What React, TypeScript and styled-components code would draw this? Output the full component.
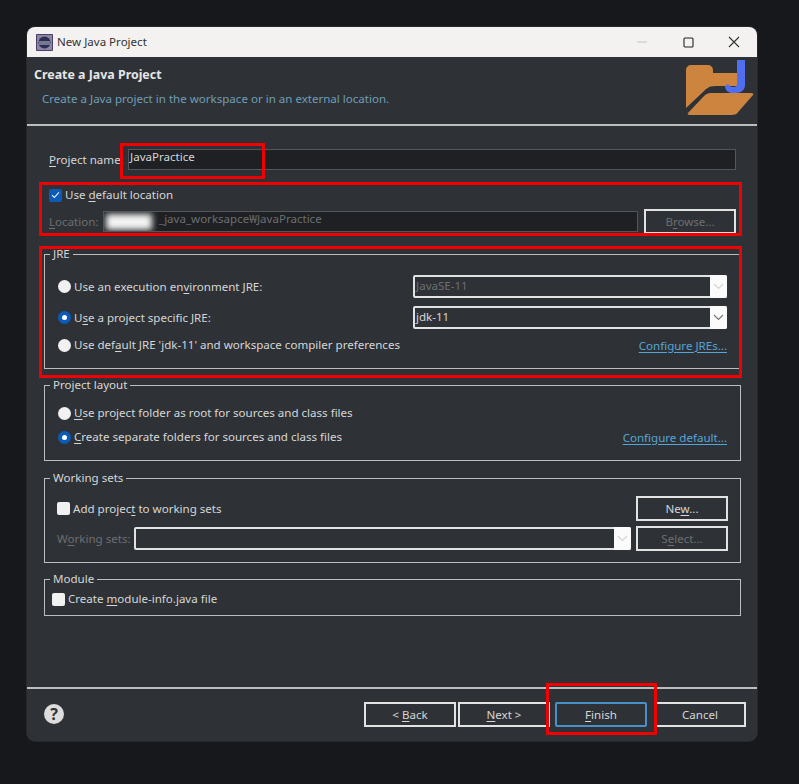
import React from 'react';
import styled, { createGlobalStyle } from 'styled-components';

const c = {
  page: '#16181b',
  panel: '#2e3236',
  field: '#1e2023',
  line: '#bdbdbd',
  text: '#d6d6d6',
  muted: '#6c6e70',
  link: '#55a5d6',
  blue: '#0a5cb8',
  red: '#f00000',
};

const GlobalStyle = createGlobalStyle`
  html, body {
    margin: 0;
    height: 100%;
    background: ${c.page};
  }
  body {
    font-family: "Noto Sans", "Open Sans", sans-serif;
    font-size: 11.55px;
    color: ${c.text};
  }
  u {
    text-underline-offset: 2px;
    text-decoration-thickness: 1px;
  }
`;

const Page = styled.div`
  padding: 27px 0 0 27px;
`;

const Window = styled.div`
  position: relative;
  width: 730px;
  height: 714px;
  display: flex;
  flex-direction: column;
  background: ${c.panel};
  border-radius: 8px;
  box-shadow: 0 0 0 1px #26292c;
  overflow: hidden;
`;

const TitleBar = styled.div`
  height: 30px;
  flex: none;
  display: flex;
  align-items: center;
  padding-left: 9px;
  background: #f3f2f0;
  color: #333;
`;

const TitleText = styled.span`
  flex: 1;
  margin-left: 4px;
  padding-bottom: 2px;
`;

const WinButton = styled.div`
  width: 46px;
  height: 30px;
  display: flex;
  align-items: center;
  justify-content: center;
`;

const Banner = styled.div`
  height: 67px;
  flex: none;
  display: flex;
  justify-content: space-between;
  padding: 0 2px 0 7px;
  border-bottom: 2px solid ${c.line};
`;

const BannerTitle = styled.div`
  font-size: 12.4px;
  font-weight: 700;
  color: #e6e6e6;
  margin-top: 9px;
  line-height: 17px;
`;

const BannerText = styled.div`
  margin: 7px 0 0 8px;
  color: #6f9db5;
  line-height: 17px;
`;

const LogoSlot = styled.div`
  margin-top: 1px;
`;

const Body = styled.div`
  flex: 1;
  display: flex;
  flex-direction: column;
  padding: 23px 16px 0 17px;
`;

const NameRow = styled.div`
  display: flex;
  align-items: center;
  padding: 0 5px;
  height: 21px;
`;

const NameLabel = styled.label`
  width: 79px;
  flex: none;
`;

const Field = styled.div<{ $disabled?: boolean }>`
  flex: 1;
  height: 21px;
  box-sizing: border-box;
  display: flex;
  align-items: center;
  padding: 0 0 6px 1px;
  overflow: hidden;
  background: ${c.field};
  border: 1px solid #53565a;
  color: ${(p) => (p.$disabled ? c.muted : c.text)};
`;

const LocationBlock = styled.div`
  display: flex;
  flex-direction: column;
  margin-top: 17px;
  padding: 0 5px;
  gap: 6px;
`;

const LocationRow = styled.div`
  display: flex;
  align-items: center;
  height: 25px;
  gap: 6px;
`;

const LocationLabel = styled.label<{ $width: number }>`
  width: ${(p) => p.$width}px;
  flex: none;
  white-space: nowrap;
  color: ${c.muted};
`;

const LocationField = styled.div`
  flex: 1;
  display: flex;
  margin-left: -6px;
`;

const Blurred = styled.span`
  width: 46px;
  height: 16px;
  margin: 6px 7px 0 1px;
  flex: none;
  background: #f4f4f4;
  filter: blur(3px);
`;

const Group = styled.div<{ $top: number; $pad: string }>`
  position: relative;
  margin-top: ${(p) => p.$top}px;
  padding: ${(p) => p.$pad};
  border: 1px solid ${c.line};
  display: flex;
  flex-direction: column;
`;

const GroupTitle = styled.span`
  position: absolute;
  top: -9px;
  left: 5px;
  padding: 0 3px;
  line-height: 16px;
  background: ${c.panel};
`;

const Row = styled.div<{ $height: number; $gap?: number }>`
  display: flex;
  align-items: center;
  justify-content: space-between;
  height: ${(p) => p.$height}px;
  margin-top: ${(p) => p.$gap ?? 0}px;
`;

const Option = styled.label`
  display: flex;
  align-items: center;
  gap: 3px;
  line-height: 16px;
`;

const Radio = styled.span<{ $on?: boolean }>`
  width: 13px;
  height: 13px;
  flex: none;
  box-sizing: border-box;
  border-radius: 50%;
  background: ${(p) => (p.$on ? c.blue : '#f1f1f1')};
  display: flex;
  align-items: center;
  justify-content: center;
  &::after {
    content: '';
    width: 5px;
    height: 5px;
    border-radius: 50%;
    background: ${(p) => (p.$on ? '#fff' : 'transparent')};
  }
`;

const Check = styled.span<{ $on?: boolean }>`
  width: 13px;
  height: 13px;
  flex: none;
  border-radius: 2px;
  background: ${(p) => (p.$on ? c.blue : '#f1f1f1')};
  display: flex;
  align-items: center;
  justify-content: center;
`;

const Combo = styled.div<{ $width: number; $disabled?: boolean }>`
  width: ${(p) => p.$width}px;
  height: 23px;
  flex: none;
  box-sizing: border-box;
  display: flex;
  align-items: stretch;
  border: 2px solid #e2e2e2;
  border-radius: 2px;
  background: ${c.panel};
  color: ${(p) => (p.$disabled ? c.muted : c.text)};
`;

const ComboText = styled.span`
  flex: 1;
  padding-left: 1px;
  line-height: 18px;
`;

const ComboArrow = styled.span`
  width: 17px;
  margin: -2px -2px -2px 0;
  background: #fbfbfb;
  border-radius: 0 2px 2px 0;
  display: flex;
  align-items: center;
  justify-content: center;
`;

const Link = styled.a`
  color: ${c.link};
  text-decoration: underline;
  text-underline-offset: 2px;
  text-decoration-thickness: 1px;
`;

const PushButton = styled.button<{ $disabled?: boolean; $focus?: boolean }>`
  width: 92px;
  height: 25px;
  flex: none;
  box-sizing: border-box;
  padding: 0;
  font: inherit;
  background: ${c.panel};
  color: ${(p) => (p.$disabled ? c.muted : c.text)};
  border: 2px solid ${(p) => (p.$focus ? '#4a90c8' : '#e2e2e2')};
  border-radius: ${(p) => (p.$focus ? '2px' : '0')};
`;

const SideRow = styled.div`
  display: flex;
  align-items: center;
  gap: 5px;
`;

const ModuleRow = styled.div`
  height: 20px;
  display: flex;
  align-items: center;
`;

const Footer = styled.div`
  height: 50px;
  flex: none;
  margin-top: auto;
  display: flex;
  align-items: center;
  padding: 0 11px 2px 17px;
  border-top: 2px solid ${c.line};
`;

const Help = styled.span`
  width: 20px;
  height: 20px;
  border-radius: 50%;
  background: #dcdcdc;
  color: #2e3236;
  font-weight: 700;
  font-size: 16px;
  line-height: 20px;
  text-align: center;
`;

const FooterButtons = styled.div`
  margin-left: auto;
  display: flex;
  gap: 2px;
`;

const FinishSlot = styled.div`
  display: flex;
  gap: 7px;
  margin-left: 3px;
`;

const Mark = styled.div<{ $x: number; $y: number; $w: number; $h: number }>`
  position: absolute;
  left: ${(p) => p.$x - 27}px;
  top: ${(p) => p.$y - 27}px;
  width: ${(p) => p.$w}px;
  height: ${(p) => p.$h}px;
  box-sizing: border-box;
  border: 3px solid ${c.red};
  pointer-events: none;
`;

const Chevron: React.FC<{ light?: boolean }> = ({ light }) => (
  <svg width="11" height="7" viewBox="0 0 11 7">
    <path d="M1 1l4.5 4.5L10 1" fill="none" stroke={light ? '#d4d4d4' : '#777'} strokeWidth="1.2" />
  </svg>
);

const Tick = () => (
  <svg width="9" height="8" viewBox="0 0 9 8">
    <path d="M1 4.2l2.4 2.2L8 1.4" fill="none" stroke="#e8f0fa" strokeWidth="1.1" />
  </svg>
);

const EclipseIcon = () => (
  <svg width="17" height="17" viewBox="0 0 17 17">
    <rect width="17" height="17" rx="1" fill="#4b3f6b" />
    <rect x="1" y="1" width="15" height="15" fill="#8c86a0" />
    <circle cx="8.5" cy="8.5" r="6" fill="#2c2f55" />
    <path d="M3 8h11M3 10h11" stroke="#e8e8ee" strokeWidth="0.8" />
  </svg>
);

const FolderLogo = () => (
  <svg width="70" height="62" viewBox="0 0 70 62">
    <path
      d="M1 12a5 5 0 0 1 5-5h17a5 5 0 0 1 5 5v3h24v13H30C24 28 21 31 18 34L1 50z"
      fill="#cc843f"
    />
    <path
      d="M3 55L19 38C21 36 23 35 26 35H66C68 35 69 36 68 37L54 53C52 56 50 57 46 57H5C3 57 2 56 3 55z"
      fill="#cc843f"
    />
    <path
      d="M52 2H60V27C60 32 56 35 51 35H47C43 35 40 32 40 28L43 26C44 28 46 29 48 29H49C51 29 52 28 52 26z"
      fill="#4f6ff0"
    />
  </svg>
);

const App: React.FC = () => (
  <Page>
    <GlobalStyle />
    <Window>
      <TitleBar>
        <EclipseIcon />
        <TitleText>New Java Project</TitleText>
        <WinButton>
          <svg width="11" height="2" viewBox="0 0 11 2"><path d="M0 1h10" stroke="#c4c4c4" /></svg>
        </WinButton>
        <WinButton>
          <svg width="11" height="11" viewBox="0 0 11 11">
            <rect x="1" y="1" width="9" height="9" rx="1" fill="none" stroke="#222" strokeWidth="1.1" />
          </svg>
        </WinButton>
        <WinButton>
          <svg width="12" height="12" viewBox="0 0 12 12">
            <path d="M1 1l10 10M11 1L1 11" stroke="#333" strokeWidth="1.1" />
          </svg>
        </WinButton>
      </TitleBar>

      <Banner>
        <div>
          <BannerTitle>Create a Java Project</BannerTitle>
          <BannerText>Create a Java project in the workspace or in an external location.</BannerText>
        </div>
        <LogoSlot><FolderLogo /></LogoSlot>
      </Banner>

      <Body>
        <NameRow>
          <NameLabel><u>P</u>roject name:</NameLabel>
          <Field>JavaPractice</Field>
        </NameRow>

        <LocationBlock>
          <Option>
            <Check $on><Tick /></Check>
            <span>Use <u>d</u>efault location</span>
          </Option>
          <LocationRow>
            <LocationLabel $width={54}><u>L</u>ocation:</LocationLabel>
            <LocationField>
              <Field $disabled>
                <Blurred />
                _java_worksapce₩JavaPractice
              </Field>
            </LocationField>
            <PushButton $disabled>B<u>r</u>owse...</PushButton>
          </LocationRow>
        </LocationBlock>

        <Group $top={20} $pad="20px 13px 13px 13px">
          <GroupTitle>JRE</GroupTitle>
          <Row $height={23}>
            <Option><Radio /><span>Use an execution en<u>v</u>ironment JRE:</span></Option>
            <Combo $width={314} $disabled>
              <ComboText>JavaSE-11</ComboText>
              <ComboArrow><Chevron light /></ComboArrow>
            </Combo>
          </Row>
          <Row $height={23} $gap={8}>
            <Option><Radio $on /><span>U<u>s</u>e a project specific JRE:</span></Option>
            <Combo $width={314}>
              <ComboText>jdk-11</ComboText>
              <ComboArrow><Chevron /></ComboArrow>
            </Combo>
          </Row>
          <Row $height={20} $gap={6}>
            <Option>
              <Radio /><span>Use def<u>a</u>ult JRE 'jdk-11' and workspace compiler preferences</span>
            </Option>
            <Link>Configure JREs...</Link>
          </Row>
        </Group>

        <Group $top={16} $pad="17px 13px 13px 13px">
          <GroupTitle>Project layout</GroupTitle>
          <Row $height={20}>
            <Option><Radio /><span><u>U</u>se project folder as root for sources and class files</span></Option>
          </Row>
          <Row $height={20} $gap={4}>
            <Option><Radio $on /><span><u>C</u>reate separate folders for sources and class files</span></Option>
            <Link>Configure default...</Link>
          </Row>
        </Group>

        <Group $top={17} $pad="17px 12px 11px 12px">
          <GroupTitle>Working sets</GroupTitle>
          <Row $height={25}>
            <Option><Check /><span>Add projec<u>t</u> to working sets</span></Option>
            <PushButton>Ne<u>w</u>...</PushButton>
          </Row>
          <Row $height={25} $gap={5}>
            <SideRow>
              <LocationLabel $width={72}>W<u>o</u>rking sets:</LocationLabel>
              <Combo $width={497}>
                <ComboText />
                <ComboArrow><Chevron light /></ComboArrow>
              </Combo>
            </SideRow>
            <PushButton $disabled>S<u>e</u>lect...</PushButton>
          </Row>
        </Group>

        <Group $top={16} $pad="9px 7px 6px 7px">
          <GroupTitle>Module</GroupTitle>
          <ModuleRow>
            <Option><Check /><span>Create <u>m</u>odule-info.java file</span></Option>
          </ModuleRow>
        </Group>
      </Body>

      <Footer>
        <Help>?</Help>
        <FooterButtons>
          <PushButton>&lt; <u>B</u>ack</PushButton>
          <PushButton><u>N</u>ext &gt;</PushButton>
          <FinishSlot>
            <PushButton $focus><u>F</u>inish</PushButton>
            <PushButton>Cancel</PushButton>
          </FinishSlot>
        </FooterButtons>
      </Footer>

      <Mark $x={120} $y={143} $w={145} $h={36} />
      <Mark $x={39} $y={182} $w={703} $h={54} />
      <Mark $x={39} $y={246} $w={703} $h={132} />
      <Mark $x={546} $y={683} $w={111} $h={52} />
    </Window>
  </Page>
);

export default App;
